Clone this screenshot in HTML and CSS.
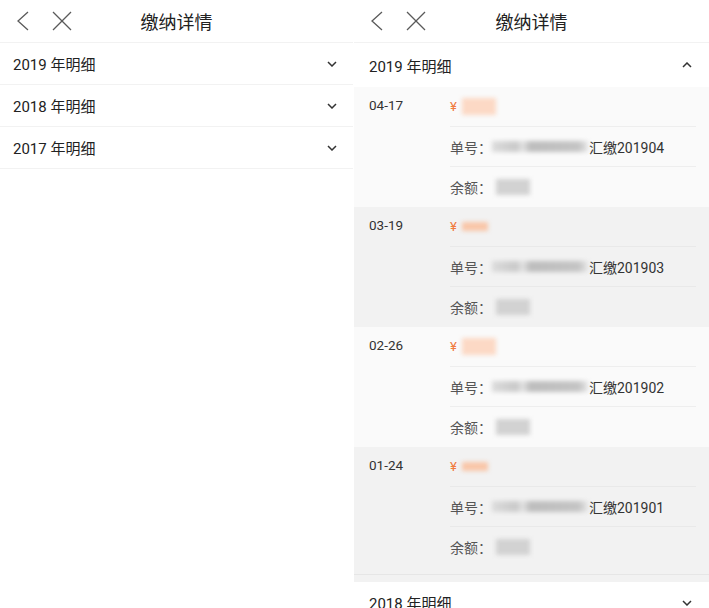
FILE: index.html
```html
<!DOCTYPE html>
<html>
<head>
    <meta charset="utf-8">
    <title>缴纳详情</title>
    <link rel="stylesheet" href="styles.css">
</head>
<body>
    <div class="screens">
        <!-- collapsed view -->
        <div class="screen left">
            <div class="nav-bar">
                <div class="nav-icons">
                    <svg class="icon-back" width="14" height="20" viewBox="0 0 14 20"><polyline points="12,1 2,10 12,19" /></svg>
                    <svg class="icon-close" width="20" height="20" viewBox="0 0 20 20"><line x1="1" y1="1" x2="19" y2="19" /><line x1="19" y1="1" x2="1" y2="19" /></svg>
                </div>
                <div class="nav-title">缴纳详情</div>
                <div></div>
            </div>
            <div class="year-row">
                <span>2019 年明细</span>
                <svg class="chevron" width="10" height="6" viewBox="0 0 10 6"><polyline points="1,1 5,5 9,1" /></svg>
            </div>
            <div class="year-row">
                <span>2018 年明细</span>
                <svg class="chevron" width="10" height="6" viewBox="0 0 10 6"><polyline points="1,1 5,5 9,1" /></svg>
            </div>
            <div class="year-row">
                <span>2017 年明细</span>
                <svg class="chevron" width="10" height="6" viewBox="0 0 10 6"><polyline points="1,1 5,5 9,1" /></svg>
            </div>
        </div>

        <!-- expanded view -->
        <div class="screen right">
            <div class="nav-bar">
                <div class="nav-icons">
                    <svg class="icon-back" width="14" height="20" viewBox="0 0 14 20"><polyline points="12,1 2,10 12,19" /></svg>
                    <svg class="icon-close" width="20" height="20" viewBox="0 0 20 20"><line x1="1" y1="1" x2="19" y2="19" /><line x1="19" y1="1" x2="1" y2="19" /></svg>
                </div>
                <div class="nav-title">缴纳详情</div>
                <div></div>
            </div>
            <div class="year-row open">
                <span>2019 年明细</span>
                <svg class="chevron" width="10" height="6" viewBox="0 0 10 6"><polyline points="1,5 5,1 9,5" /></svg>
            </div>
            <div class="pay-list" id="payList"></div>
            <div class="list-end"></div>
            <div class="year-row last">
                <span>2018 年明细</span>
                <svg class="chevron" width="10" height="6" viewBox="0 0 10 6"><polyline points="1,1 5,5 9,1" /></svg>
            </div>
        </div>
    </div>

    <script>
        const payments = [
            { date: '04-17', no: '汇缴201904' },
            { date: '03-19', no: '汇缴201903' },
            { date: '02-26', no: '汇缴201902' },
            { date: '01-24', no: '汇缴201901' }
        ];

        const list = document.getElementById('payList');
        payments.forEach((p, i) => {
            const item = document.createElement('div');
            item.className = 'pay-item' + (i % 2 ? ' alt' : '');
            item.innerHTML = `
                <div class="pay-date">${p.date}</div>
                <div class="pay-rows">
                    <div class="pay-row"><span class="yen">¥</span><span class="blur amount"></span></div>
                    <div class="pay-row"><span class="label">单号：</span><span class="blur number"></span><span class="value">${p.no}</span></div>
                    <div class="pay-row"><span class="label">余额：</span><span class="blur balance"></span></div>
                </div>`;
            list.appendChild(item);
        });
    </script>
</body>
</html>
```

FILE: styles.css
```css
body {
    margin: 0;
    padding: 0;
    font-family: Roboto, "Noto Sans CJK SC", sans-serif;
    color: #222;
    background-color: #ffffff;
    overflow: hidden;
}

.screens {
    display: flex;
    gap: 1px;
    height: 608px;
}

.screen {
    display: flex;
    flex-direction: column;
    background-color: #ffffff;
    overflow: hidden;
}

.screen.left {
    width: 353px;
}

.screen.right {
    width: 355px;
}

.nav-bar {
    display: grid;
    grid-template-columns: 1fr auto 1fr;
    align-items: center;
    height: 42px;
    border-bottom: 1px solid #f2f2f2;
    flex-shrink: 0;
}

.nav-icons {
    display: flex;
    align-items: center;
    gap: 22px;
    padding-left: 16px;
}

.nav-icons svg {
    fill: none;
    stroke: #5a5a5a;
    stroke-width: 1.3;
}

.nav-title {
    font-size: 18px;
    color: #222;
}

.year-row {
    display: flex;
    justify-content: space-between;
    align-items: center;
    height: 41px;
    padding: 0 16px 0 13px;
    font-size: 15px;
    color: #222;
    border-bottom: 1px solid #f2f2f2;
    flex-shrink: 0;
}

.right .year-row {
    padding-left: 15px;
    padding-right: 17px;
}

.year-row.open {
    height: 44px;
    border-bottom: none;
}

.year-row.last {
    border-bottom: none;
}

.chevron {
    fill: none;
    stroke: #333;
    stroke-width: 1.5;
}

.pay-item {
    display: flex;
    background-color: #fafafa;
}

.pay-item.alt {
    background-color: #f2f2f2;
}

.pay-date {
    width: 81px;
    padding: 10px 0 0 15px;
    font-size: 13.5px;
    color: #333;
    flex-shrink: 0;
}

.pay-rows {
    flex-grow: 1;
    margin-right: 13px;
}

.pay-row {
    display: flex;
    align-items: center;
    height: 39px;
    font-size: 14px;
    color: #555;
    border-bottom: 1px solid #eeeeee;
}

.pay-item.alt .pay-row {
    border-bottom-color: #e9e9e9;
}

.pay-row:last-child {
    border-bottom: none;
    height: 40px;
}

.yen {
    color: #f07b3f;
    font-size: 13px;
    margin-right: 5px;
}

.label {
    color: #555;
}

.value {
    color: #333;
}

.blur {
    display: inline-block;
    filter: blur(2px);
}

.amount {
    width: 34px;
    height: 17px;
    background-color: #fcd9c5;
}

.pay-item.alt .amount {
    width: 26px;
    height: 9px;
    background-color: #f8c6a8;
}

.number {
    width: 96px;
    height: 11px;
    margin: 0 1px 0 0;
    background: linear-gradient(90deg, #dcdcdc 0%, #c9c9c9 25%, #e2e2e2 32%, #bdbdbd 40%, #c4c4c4 90%, #e6e6e6 100%);
}

.balance {
    width: 34px;
    height: 16px;
    margin-left: 4px;
    background-color: #d2d2d2;
}

.list-end {
    height: 15px;
    flex-shrink: 0;
    background: linear-gradient(#f2f2f2 7px, #e6e6e6 7px, #e6e6e6 8px, #f2f2f2 8px);
}
```
